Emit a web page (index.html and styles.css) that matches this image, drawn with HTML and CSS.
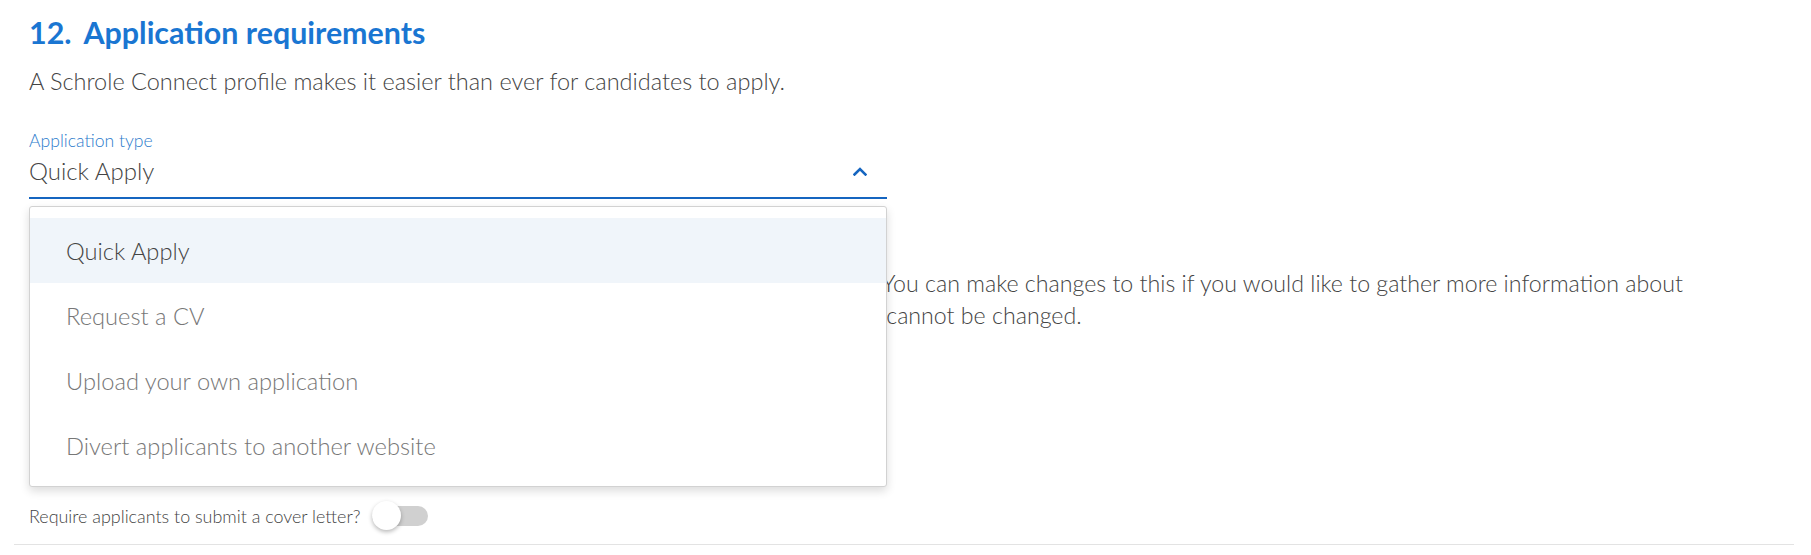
FILE: index.html
```html
<!DOCTYPE html>
<html lang="en">
<head>
<meta charset="utf-8">
<title>Application requirements</title>
<link rel="stylesheet" href="styles.css">
</head>
<body>
<section class="section">
  <h2 class="title"><span class="title-num">12.</span>Application requirements</h2>
  <p class="subtitle">A Schrole Connect profile makes it easier than ever for candidates to apply.</p>

  <div class="field">
    <div class="field-label">Application type</div>
    <div class="field-control">
      <span class="field-value">Quick Apply</span>
      <svg class="chevron" width="14" height="9" viewBox="0 0 14 9" aria-hidden="true">
        <polyline points="1.5,7.5 7,2 12.5,7.5" fill="none" stroke="#1565c0" stroke-width="2.6" stroke-linecap="square"/>
      </svg>
    </div>
    <ul class="menu">
      <li class="menu-item selected">Quick Apply</li>
      <li class="menu-item">Request a CV</li>
      <li class="menu-item">Upload your own application</li>
      <li class="menu-item">Divert applicants to another website</li>
    </ul>
  </div>

  <p class="description">Quick Apply is the default application type for all new jobs listed on Schrole Connect. You can make changes to this if you would like to gather more information about candidates. Please note that once the job has been published the job application type cannot be changed.</p>

  <div class="toggle-row">
    <span class="toggle-label">Require applicants to submit a cover letter?</span>
    <span class="switch"><span class="switch-track"></span><span class="switch-thumb"></span></span>
  </div>
</section>
</body>
</html>
```
FILE: styles.css
```css
html, body {
  margin: 0;
  background: #ffffff;
}
body {
  font-family: "Lato Light", Lato, "Open Sans", sans-serif;
  color: #444444;
}
.section {
  margin: 0 17px 0 14px;
  padding: 14px 15px 14px;
  border-bottom: 1px solid #e3e3e3;
}
.title {
  margin: 0;
  font-family: Lato, "Open Sans", sans-serif;
  font-size: 30.4px;
  line-height: 36px;
  font-weight: 700;
  color: #1a76d2;
}
.title-num {
  margin-right: 12px;
}
.subtitle {
  margin: 17px 0 0;
  font-size: 23.5px;
  line-height: 28px;
  font-weight: 300;
  color: #444444;
}
.field {
  position: relative;
  width: 858px;
  margin-top: 36px;
}
.field-label {
  font-size: 17.6px;
  line-height: 20px;
  font-weight: 300;
  color: #2c7bcc;
}
.field-control {
  display: flex;
  align-items: center;
  justify-content: space-between;
  padding: 6px 20px 12px 0;
  border-bottom: 2px solid #1565c0;
}
.field-value {
  font-size: 24px;
  line-height: 28px;
  font-weight: 300;
  color: #444444;
}
.chevron {
  display: block;
}
.menu {
  position: absolute;
  top: calc(100% + 7px);
  left: 0;
  width: 858px;
  box-sizing: border-box;
  margin: 0;
  padding: 11px 0 8px;
  list-style: none;
  background: #ffffff;
  border: 1px solid #d2d2d2;
  border-radius: 3px;
  box-shadow: 0 4px 10px rgba(0, 0, 0, 0.14);
  z-index: 2;
}
.menu-item {
  display: flex;
  align-items: center;
  height: 65px;
  padding-left: 36px;
  font-size: 23.7px;
  font-weight: 300;
  color: #777777;
}
.menu-item.selected {
  background: #f0f5fa;
  color: #444444;
}
.description {
  margin: 68px 0 0;
  font-size: 23.2px;
  line-height: 32px;
  font-weight: 300;
  color: #444444;
}
.toggle-row {
  display: flex;
  align-items: center;
  gap: 12px;
  height: 29px;
  margin-top: 170px;
}
.toggle-label {
  font-size: 17.9px;
  font-weight: 300;
  color: #444444;
}
.switch {
  position: relative;
  display: inline-flex;
  align-items: center;
  width: 56px;
  height: 29px;
}
.switch-track {
  width: 56px;
  height: 20px;
  border-radius: 10px;
  background: #d0d0d0;
}
.switch-thumb {
  position: absolute;
  left: 0;
  top: 0;
  width: 29px;
  height: 29px;
  border-radius: 50%;
  background: #ffffff;
  box-shadow: 0 2px 4px rgba(0, 0, 0, 0.28);
}
```
